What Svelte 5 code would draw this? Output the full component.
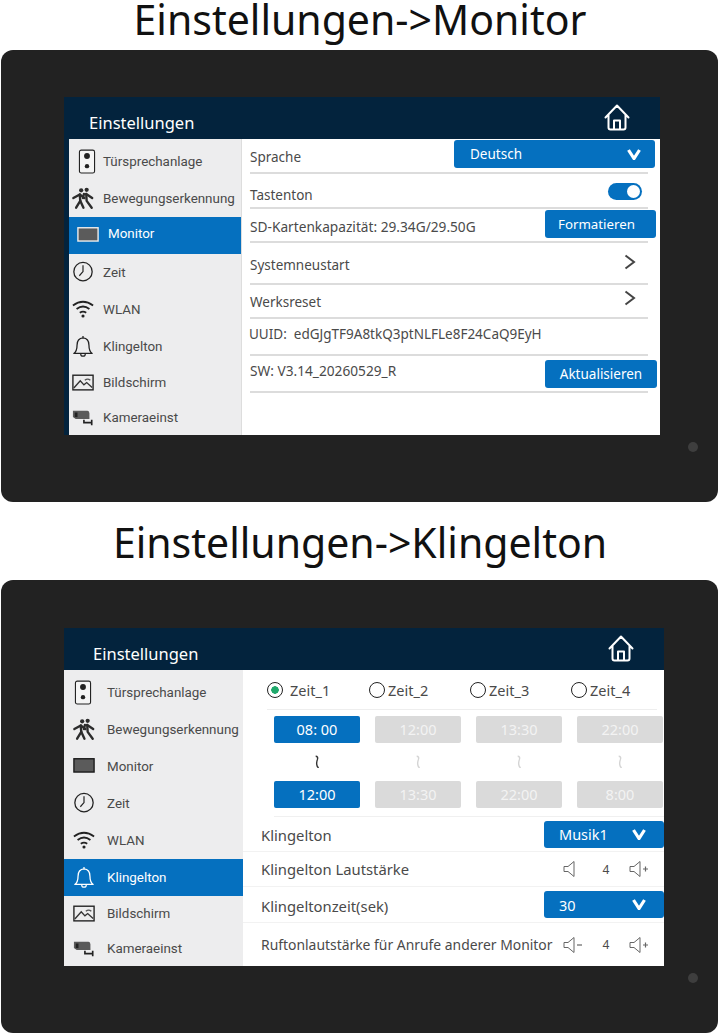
<script>
const menu = [
	{id: 'door', label: 'Türsprechanlage'},
	{id: 'motion', label: 'Bewegungserkennung'},
	{id: 'monitor', label: 'Monitor'},
	{id: 'clock', label: 'Zeit'},
	{id: 'wifi', label: 'WLAN'},
	{id: 'bell', label: 'Klingelton'},
	{id: 'picture', label: 'Bildschirm', short: true},
	{id: 'camera', label: 'Kameraeinst', short: true},
]

const slots = [
	{label: 'Zeit_1', from: '08: 00', to: '12:00', active: true},
	{label: 'Zeit_2', from: '12:00', to: '13:30'},
	{label: 'Zeit_3', from: '13:30', to: '22:00'},
	{label: 'Zeit_4', from: '22:00', to: '8:00'},
]
</script>

{#snippet icon(id)}
	<svg class="icon" class:door={id === 'door'} viewBox="0 0 24 24" aria-hidden="true">
		{#if id === 'door'}
			<rect x="3.750" y="-1" width="16.500" height="25" rx="2" fill="#f5f5f5" stroke="#222" stroke-width="1.200" />
			<circle cx="12" cy="5.500" r="3.200" fill="#222" />
			<circle cx="12" cy="16.500" r="2.400" fill="#222" />
		{:else if id === 'motion'}
			<g fill="#2c2c2c">
				<circle cx="10" cy="2.500" r="2.300" />
				<circle cx="16" cy="2" r="2.300" />
			</g>
			<g fill="none" stroke="#2c2c2c" stroke-width="2.600" stroke-linecap="round" stroke-linejoin="round">
				<path d="M1.500 11 L8.500 7 L9 14 L4.500 21.500" />
				<path d="M9 14 L12.500 21.500" />
				<path d="M8.500 7 L13.500 11" />
				<path d="M15.500 6.500 L16 14 L21.500 21.500" />
				<path d="M15.500 6.500 L22 11" />
				<path d="M13 6.500 L12 11" />
			</g>
		{:else if id === 'monitor'}
			<rect class="panel" x="1" y="3" width="22" height="14.500" />
		{:else if id === 'clock'}
			<circle cx="12" cy="10.500" r="10" fill="none" stroke="#222" stroke-width="1.400" />
			<path d="M12 3.500 V10.500 L8 15" fill="none" stroke="#222" stroke-width="1.300" />
		{:else if id === 'wifi'}
			<g fill="none" stroke="#222" stroke-width="2">
				<path d="M1 7 Q12 -1 23 7" />
				<path d="M5 11 Q12 5.500 19 11" />
				<path d="M8.500 15 Q12 12.500 15.500 15" />
			</g>
			<circle cx="12" cy="18.500" r="1.700" fill="#222" />
		{:else if id === 'bell'}
			<path d="M2 19 Q5.500 16.500 5.500 10 Q5.500 2.500 12 2 Q18.500 2.500 18.500 10 Q18.500 16.500 22 19 Z" fill="none" stroke="#222" stroke-width="1.400" stroke-linejoin="round" />
			<path d="M9.500 19.500 A2.500 2.500 0 0 0 14.500 19.500" fill="none" stroke="#222" stroke-width="1.300" />
			<path d="M12 0 V2" stroke="#222" stroke-width="1.400" />
		{:else if id === 'picture'}
			<rect x="1" y="3.500" width="22" height="16" fill="none" stroke="#222" stroke-width="1.500" />
			<path d="M2 17.500 L9 9.500 L13 14 L16 11.500 L22 17" fill="none" stroke="#333" stroke-width="1.500" />
			<path d="M14 9 Q17 6.500 20 9" fill="none" stroke="#555" stroke-width="1.500" />
		{:else if id === 'camera'}
			<path d="M1 4 H17 Q19 4 19 7 V13 H4 L1 11 Z" fill="#5a5a5a" />
			<rect x="3" y="6" width="3" height="5" fill="#222" />
			<path d="M13 14 V17 H21 M21.500 14 V20" fill="none" stroke="#222" stroke-width="1.800" />
		{/if}
	</svg>
{/snippet}

{#snippet sidebar(current)}
	<nav class="sidebar">
		{#each menu as item}
			<div class="item" class:short={item.short} class:selected={item.label === current}>
				{@render icon(item.id)}
				<span>{item.label}</span>
			</div>
		{/each}
	</nav>
{/snippet}

{#snippet topbar()}
	<header class="topbar">
		<span>Einstellungen</span>
		<svg class="home" viewBox="0 0 26 27" aria-hidden="true">
			<path d="M1.500 13.500 L13 1.500 L24.500 13.500 M4.500 11 V23.500 Q4.500 25.500 6.500 25.500 H19.500 Q21.500 25.500 21.500 23.500 V11 M10 25 V16.500 H16 V25" fill="none" stroke="#fff" stroke-width="2" stroke-linejoin="round" stroke-linecap="round" />
		</svg>
	</header>
{/snippet}

{#snippet chevron()}
	<svg class="vee" viewBox="0 0 14 11" aria-hidden="true">
		<path d="M1.500 1 L7 9.500 L12.500 1" fill="none" stroke="#fff" stroke-width="3.200" />
	</svg>
{/snippet}

{#snippet speaker(sign)}
	<svg class="speaker" viewBox="0 0 20 18" aria-hidden="true">
		<path d="M1 6.500 H5 L11 1.500 V16.500 L5 11.500 H1 Z" fill="none" stroke="#666" stroke-width="1" stroke-linejoin="round" />
		{#if sign === '+'}
			<path d="M14 9 H19 M16.500 6.500 V11.500" stroke="#666" stroke-width="1.200" />
		{:else if sign === '-'}
			<path d="M14 9 H19" stroke="#666" stroke-width="1.200" />
		{/if}
	</svg>
{/snippet}

{#snippet arrow()}
	<svg class="arrow" viewBox="0 0 12 16" aria-hidden="true"><path d="M1.500 1.500 L10 8 L1.500 14.500" fill="none" stroke="#444" stroke-width="2" /></svg>
{/snippet}

<main class="page">
	<h1 class="title first">Einstellungen-&gt;Monitor</h1>
	<section class="device one">
		<div class="screen">
			{@render topbar()}
			<div class="body">
				{@render sidebar('Monitor')}
				<div class="settings">
					<div class="row sprache">
						<span>Sprache</span>
						<div class="select lang"><span>Deutsch</span>{@render chevron()}</div>
					</div>
					<div class="row tasten">
						<span>Tastenton</span>
						<div class="toggle"><i></i></div>
					</div>
					<div class="row sd">
						<span>SD-Kartenkapazität: 29.34G/29.50G</span>
						<div class="btn">Formatieren</div>
					</div>
					<div class="row reboot">
						<span>Systemneustart</span>
						{@render arrow()}
					</div>
					<div class="row reset">
						<span>Werksreset</span>
						{@render arrow()}
					</div>
					<div class="row uuid">
						<span>UUID:&nbsp; edGJgTF9A8tkQ3ptNLFLe8F24CaQ9EyH</span>
					</div>
					<div class="row sw">
						<span>SW: V3.14_20260529_R</span>
						<div class="btn">Aktualisieren</div>
					</div>
				</div>
			</div>
		</div>
		<i class="dot"></i>
	</section>

	<h1 class="title second">Einstellungen-&gt;Klingelton</h1>
	<section class="device two">
		<div class="screen">
			{@render topbar()}
			<div class="body">
				{@render sidebar('Klingelton')}
				<div class="settings ring">
					<div class="radios">
						{#each slots as slot}
							<div class="radio" class:on={slot.active}><i></i><span>{slot.label}</span></div>
						{/each}
					</div>
					<div class="times">
						{#each slots as slot}
							<div class="time" class:active={slot.active}>{slot.from}</div>
						{/each}
						{#each slots as slot}
							<div class="tilde" class:active={slot.active}>
								<svg viewBox="0 0 6 16" aria-hidden="true"><path d="M1.500 1.500 Q4.500 1.500 3.500 5 Q2 9 3 12 Q3.500 14.500 5 14" fill="none" stroke="currentColor" stroke-width="1.600" /></svg>
							</div>
						{/each}
						{#each slots as slot}
							<div class="time" class:active={slot.active}>{slot.to}</div>
						{/each}
					</div>
					<div class="line r1">
						<span class="label">Klingelton</span>
						<div class="select"><span>Musik1</span>{@render chevron()}</div>
					</div>
					<div class="line r2">
						<span>Klingelton Lautstärke</span>
						<div class="volume">{@render speaker('')}<b>4</b>{@render speaker('+')}</div>
					</div>
					<div class="line r3">
						<span class="label">Klingeltonzeit(sek)</span>
						<div class="select"><span>30</span>{@render chevron()}</div>
					</div>
					<div class="line r4">
						<span>Ruftonlautstärke für Anrufe anderer Monitor</span>
						<div class="volume">{@render speaker('-')}<b>4</b>{@render speaker('+')}</div>
					</div>
				</div>
			</div>
		</div>
		<i class="dot"></i>
	</section>
</main>

<style>
:global(body) {
	background: #fff;
}

.page {
	width: 720px;
	height: 1036px;
	font-family: "Noto Sans", sans-serif;
	color: #4a4a4a;
}

.title {
	margin: 0;
	text-align: center;
	font-weight: 400;
	font-size: 41px;
	color: #111;
}

.title.first {
	height: 50px;
	line-height: 38px;
}

.title.second {
	height: 78px;
	line-height: 80px;
}

.device {
	position: relative;
	box-sizing: border-box;
	width: 717px;
	margin-left: 1px;
	padding-left: 63px;
	background: #222;
	border-radius: 12px;
}

.device.one {
	height: 452px;
	padding-top: 47px;
}

.device.two {
	height: 453px;
	padding-top: 48px;
}

.dot {
	position: absolute;
	right: 20px;
	bottom: 50px;
	width: 10px;
	height: 10px;
	border-radius: 50%;
	background: #3e3e3e;
}

.screen {
	height: 338px;
	display: flex;
	flex-direction: column;
	background: #03233d;
}

.one .screen {
	width: 596px;
}

.two .screen {
	width: 600px;
}

.topbar {
	flex: 0 0 42px;
	box-sizing: border-box;
	display: flex;
	justify-content: space-between;
	align-items: flex-start;
	padding: 14px 30px 0 25px;
	font-size: 16.500px;
	line-height: 23px;
	color: #fff;
}

.two .topbar {
	padding-left: 29px;
}

.home {
	width: 26px;
	height: 27px;
	margin-top: -7px;
}

.body {
	flex: 1;
	display: flex;
	min-height: 0;
}

.one .body {
	margin-left: 5px;
}

.sidebar {
	flex: 0 0 173px;
	box-sizing: border-box;
	padding-top: 4px;
	background: #ededee;
	border-right: 1px solid #ddd;
	font-family: Roboto, sans-serif;
	font-size: 13.400px;
}

.two .sidebar {
	flex-basis: 179px;
	border-right: none;
}

.item {
	height: 37px;
	display: flex;
	align-items: center;
	gap: 9px;
	padding-left: 3px;
	white-space: nowrap;
}

.two .item {
	padding-left: 9px;
	gap: 12px;
}

.item.short {
	height: 35px;
}

.item.selected {
	background: #0570bf;
	color: #fff;
}

.one .item.selected {
	padding-left: 8px;
}

.one .item.selected span {
	margin-top: -5px;
}

.item.selected .icon {
	filter: brightness(0) invert(1);
}

.one .item.selected .icon {
	filter: none;
}

.panel {
	fill: #5b5b5b;
	stroke: #1a1a1a;
	stroke-width: 1.500;
}

.selected .panel {
	stroke: #efefef;
}

.icon {
	flex: 0 0 22px;
	width: 22px;
	height: 22px;
	overflow: visible;
}

.one .icon.door {
	margin: 0 -4px 0 4px;
}

.two .icon.door {
	margin: 0 1px 0 -1px;
}

.settings {
	flex: 1;
	min-width: 0;
	box-sizing: border-box;
	background: #fff;
	padding: 0 12px 0 8px;
	font-size: 13.500px;
}

.row {
	display: flex;
	justify-content: space-between;
	align-items: center;
	box-sizing: border-box;
	border-bottom: 2px solid #dcdcdc;
}

.sprache { height: 35px; padding-top: 2px; }
.tasten { height: 35px; padding-top: 8px; }
.sd { height: 34px; padding-top: 3px; font-size: 13.700px; }
.reboot { height: 42px; padding-top: 4px; }
.reset { height: 34px; padding-top: 2px; }
.uuid { height: 37px; padding-bottom: 5px; }
.uuid span { margin-left: -1px; }
.sw { height: 37px; padding-bottom: 6px; font-size: 13.700px; }

.select {
	box-sizing: border-box;
	display: flex;
	justify-content: space-between;
	align-items: center;
	background: #0570bf;
	color: #fff;
	border-radius: 3px;
}

.lang {
	width: 201px;
	height: 28px;
	margin: -5px -7px 0 0;
	padding: 0 14px 0 16px;
	font-size: 13.500px;
}

.vee {
	width: 14px;
	height: 11px;
}

.toggle {
	position: relative;
	width: 34px;
	height: 17px;
	margin: -6px 6px 0 0;
	border-radius: 9px;
	background: #0570bf;
}

.toggle i {
	position: absolute;
	right: 2px;
	top: 2px;
	width: 13px;
	height: 13px;
	border-radius: 50%;
	background: #fff;
}

.btn {
	box-sizing: border-box;
	width: 111px;
	height: 28px;
	line-height: 28px;
	margin-right: -8px;
	text-align: center;
	background: #0570bf;
	color: #fff;
	border-radius: 3px;
	font-size: 13.300px;
}

.sd .btn {
	margin-top: -6px;
	padding-right: 8px;
}

.sw .btn {
	width: 112px;
	margin: 6px -9px 0 0;
	font-size: 13.500px;
}

.arrow {
	width: 12px;
	height: 16px;
	margin-right: 12px;
}

.reboot .arrow {
	margin-top: -6px;
}

.reset .arrow {
	margin-top: -8px;
}

.ring {
	padding: 0;
	font-size: 14.800px;
}

.radios {
	box-sizing: border-box;
	height: 40px;
	margin-left: 24px;
	margin-right: 7px;
	display: grid;
	grid-template-columns: repeat(4, 101px);
	align-items: center;
	border-bottom: 1px solid #eee;
	font-size: 14.500px;
}

.radio {
	display: flex;
	align-items: center;
	gap: 3px;
	margin-left: 1px;
}

.radio.on {
	gap: 7px;
	margin-left: 0;
}

.radio i {
	box-sizing: border-box;
	width: 16px;
	height: 16px;
	border: 1.500px solid #222;
	border-radius: 50%;
}

.radio.on i {
	background: radial-gradient(circle, #1fa86b 0 3.500px, #fff 4px);
}

.times {
	box-sizing: border-box;
	height: 107px;
	margin-left: 31px;
	padding: 6px 0 8px;
	display: grid;
	grid-template-columns: repeat(4, 86px);
	grid-template-rows: 27px 38px 27px;
	column-gap: 15px;
	border-bottom: 1px solid #f0f0f0;
}

.time {
	background: #dadada;
	color: #f3f3f3;
	border-radius: 2px;
	text-align: center;
	line-height: 27px;
	font-size: 14.500px;
}

.time.active {
	background: #0570bf;
	color: #fff;
}

.tilde {
	display: flex;
	align-items: center;
	justify-content: center;
	color: #d4d4d4;
}

.tilde.active {
	color: #333;
}

.tilde svg {
	width: 6px;
	height: 14px;
}

.line {
	box-sizing: border-box;
	display: flex;
	justify-content: space-between;
	align-items: center;
	padding-left: 18px;
	border-bottom: 1px solid #f2f2f2;
	white-space: nowrap;
}

.label {
	margin-top: 2px;
}

.r1 { height: 35px; }
.r2 { height: 35px; }
.r3 { height: 36px; }
.r4 { height: 43px; border-bottom: none; font-size: 13.900px; }

.line .select {
	flex: 0 0 120px;
	height: 27px;
	padding: 0 18px 0 15px;
	font-size: 14.500px;
}

.volume {
	flex: 0 0 86px;
	display: flex;
	align-items: center;
	justify-content: space-between;
	margin-right: 15px;
	font-size: 12px;
}

.volume b {
	font-weight: 400;
}

.speaker {
	width: 20px;
	height: 18px;
}
</style>
